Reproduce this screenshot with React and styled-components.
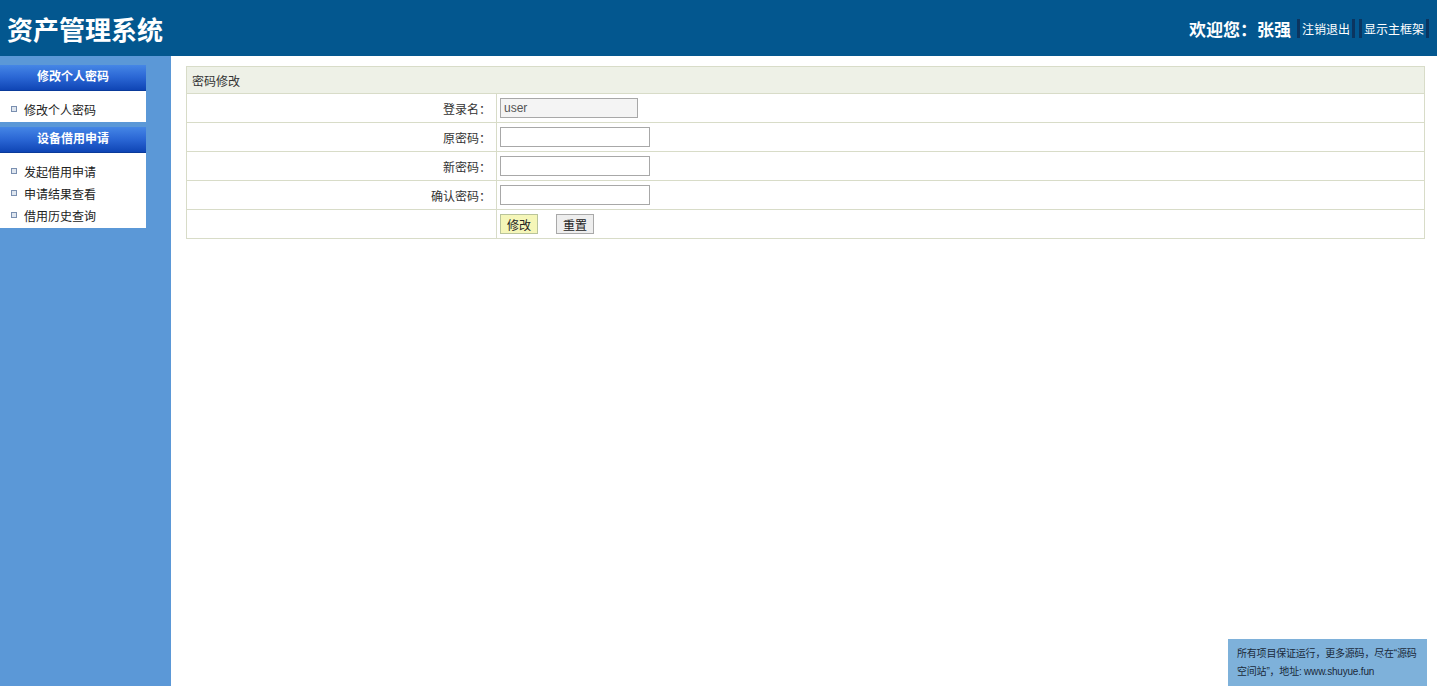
import styled, { createGlobalStyle } from 'styled-components';

const GlobalStyle = createGlobalStyle`
    html, body {
        margin: 0;
        padding: 0;
        height: 100%;
        font-family: "Liberation Sans", "Noto Sans CJK SC", sans-serif;
        font-size: 12px;
        color: #333;
        background: #fff;
    }
    #root {
        height: 100%;
    }
`;

const Page = styled.div`
    height: 686px;
    display: flex;
    flex-direction: column;
    overflow: hidden;
`;

const Header = styled.div`
    height: 56px;
    background-color: #03578f;
    display: flex;
    align-items: center;
    justify-content: space-between;
    padding: 0 8px 0 7px;
    flex-shrink: 0;
`;

const Title = styled.div`
    color: #fff;
    font-size: 26px;
    font-weight: bold;
`;

const UserBar = styled.div`
    display: flex;
    align-items: center;
    color: #fff;
    font-weight: bold;
    font-size: 17px;
`;

const UserName = styled.span`
    margin: 0 2px 0 0;
`;

const TopLink = styled.a`
    font-size: 12px;
    font-weight: normal;
    color: #fff;
    text-decoration: none;
    padding: 1px 2px;
    border-left: 3px solid #0b3560;
    border-right: 3px solid #0b3560;
    margin-left: 4px;
`;

const Body = styled.div`
    flex: 1;
    display: flex;
`;

const Sidebar = styled.div`
    width: 171px;
    background-color: #5b98d7;
    padding-top: 9px;
    flex-shrink: 0;
`;

const MenuGroup = styled.div`
    width: 146px;
    margin-bottom: 5px;
`;

const MenuTitle = styled.div`
    box-sizing: border-box;
    height: 26px;
    line-height: 25px;
    text-align: center;
    color: #fff;
    font-weight: bold;
    font-size: 12px;
    background: linear-gradient(to bottom, #4586e6 0%, #2a66d4 50%, #0f45b5 100%);
    border-bottom: 1px solid #0a3a9a;
`;

const MenuList = styled.ul`
    list-style: none;
    margin: 0;
    padding: 7px 0 2px 0;
    background: #fff;
`;

const MenuItem = styled.li`
    height: 22px;
    display: flex;
    align-items: center;
    padding-left: 11px;
    color: #222;
    font-size: 12px;

    &::before {
        content: '';
        width: 4px;
        height: 4px;
        border: 1px solid #7a8fb0;
        background: #dfe6ef;
        margin-right: 7px;
    }
`;

const Main = styled.div`
    flex: 1;
    padding: 10px 12px 0 15px;
`;

const Table = styled.table`
    width: 100%;
    border-collapse: collapse;
    border: 1px solid #d8dcc8;
`;

const Caption = styled.td`
    background: #eef1e7;
    height: 26px;
    padding: 0 5px;
    border-bottom: 1px solid #d8dcc8;
    font-size: 12px;
`;

const Row = styled.tr`
    height: 29px;
    border-bottom: 1px solid #d8dcc8;
`;

const Label = styled.td`
    width: 304px;
    text-align: right;
    padding: 0 5px 0 0;
    border-right: 1px solid #d8dcc8;
    font-size: 12px;
`;

const Field = styled.td`
    padding: 0 0 0 3px;
`;

const Input = styled.input`
    box-sizing: border-box;
    width: ${p => (p.readOnly ? '138px' : '150px')};
    height: 20px;
    border: 1px solid #a8a8a8;
    background: ${p => (p.readOnly ? '#f4f4f4' : '#fff')};
    font-size: 12px;
    color: #555;
    padding: 0 3px;
    font-family: "Liberation Sans", "Noto Sans CJK SC", sans-serif;
    display: block;
`;

const Button = styled.button`
    height: 20px;
    padding: 0 6px;
    border: 1px solid ${p => (p.primary ? '#b9c49a' : '#a9a9a9')};
    background: ${p => (p.primary ? '#f5f6b8' : '#eeeeee')};
    font-size: 12px;
    color: #222;
    margin-right: 18px;
    font-family: "Liberation Sans", "Noto Sans CJK SC", sans-serif;
`;

const Notice = styled.div`
    position: fixed;
    right: 10px;
    bottom: 0;
    width: 199px;
    height: 47px;
    box-sizing: border-box;
    padding: 6px 4px 6px 9px;
    background: #7eb1da;
    color: #1a2a3a;
    font-size: 10px;
    line-height: 18px;
    letter-spacing: -0.2px;
`;

function App() {
    return (
        <>
            <GlobalStyle />
            <Page>
                <Header>
                    <Title>资产管理系统</Title>
                    <UserBar>
                        欢迎您：
                        <UserName>张强</UserName>
                        <TopLink href="#">注销退出</TopLink>
                        <TopLink href="#">显示主框架</TopLink>
                    </UserBar>
                </Header>
                <Body>
                    <Sidebar>
                        <MenuGroup>
                            <MenuTitle>修改个人密码</MenuTitle>
                            <MenuList>
                                <MenuItem>修改个人密码</MenuItem>
                            </MenuList>
                        </MenuGroup>
                        <MenuGroup>
                            <MenuTitle>设备借用申请</MenuTitle>
                            <MenuList>
                                <MenuItem>发起借用申请</MenuItem>
                                <MenuItem>申请结果查看</MenuItem>
                                <MenuItem>借用历史查询</MenuItem>
                            </MenuList>
                        </MenuGroup>
                    </Sidebar>
                    <Main>
                        <Table>
                            <tbody>
                                <tr>
                                    <Caption colSpan={2}>密码修改</Caption>
                                </tr>
                                <Row>
                                    <Label>登录名：</Label>
                                    <Field><Input readOnly value="user" /></Field>
                                </Row>
                                <Row>
                                    <Label>原密码：</Label>
                                    <Field><Input type="password" /></Field>
                                </Row>
                                <Row>
                                    <Label>新密码：</Label>
                                    <Field><Input type="password" /></Field>
                                </Row>
                                <Row>
                                    <Label>确认密码：</Label>
                                    <Field><Input type="password" /></Field>
                                </Row>
                                <Row>
                                    <Label />
                                    <Field>
                                        <Button primary>修改</Button>
                                        <Button>重置</Button>
                                    </Field>
                                </Row>
                            </tbody>
                        </Table>
                    </Main>
                </Body>
                <Notice>所有项目保证运行，更多源码，尽在“源码空间站”，地址: www.shuyue.fun</Notice>
            </Page>
        </>
    );
}

export default App;
